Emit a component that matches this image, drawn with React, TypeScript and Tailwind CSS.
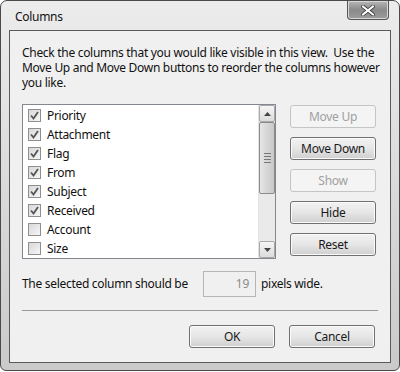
import React from "react";

const columns = [
  { name: "Priority", on: true },
  { name: "Attachment", on: true },
  { name: "Flag", on: true },
  { name: "From", on: true },
  { name: "Subject", on: true },
  { name: "Received", on: true },
  { name: "Account", on: false },
  { name: "Size", on: false },
];

const intro = [
  "Check the columns that you would like visible in this view.\u00a0 Use the",
  "Move Up and Move Down buttons to reorder the columns however",
  "you like.",
];

function Check({ on }: { on: boolean }) {
  return (
    <span className="w-[13px] h-[13px] border border-[#8e8f8f] bg-gradient-to-br from-[#d8d8d8] to-[#f6f6f6] flex items-center justify-center shrink-0">
      {on && (
        <svg width="9" height="9" viewBox="0 0 9 9">
          <path d="M1 4.5 L3.5 7.5 L8 1" fill="none" stroke="#555" strokeWidth="1.8" />
        </svg>
      )}
    </span>
  );
}

function Btn({ label, disabled }: { label: string; disabled?: boolean }) {
  return (
    <div
      className={
        "w-[86px] h-[23px] rounded-[3px] border flex items-center justify-center text-[12px] " +
        (disabled
          ? "border-[#c4c4c4] bg-[#f4f4f4] text-[#a0a0a0]"
          : "border-[#707070] bg-gradient-to-b from-[#f2f2f2] via-[#e6e6e6] to-[#cfcfcf] text-[#1a1a1a] shadow-[inset_0_0_0_1px_#fbfbfb]")
      }
    >
      {label}
    </div>
  );
}

export default function App() {
  return (
    <div className="w-[400px] h-[372px] bg-white tracking-[-0.3px]" style={{ fontFamily: '"Noto Sans", "Open Sans", sans-serif' }}>
      <div className="relative w-[400px] h-[371px] rounded-t-[7px] rounded-b-[6px] border border-[#4a4a4a] bg-gradient-to-b from-[#ececec] via-[#dadada] to-[#cacaca] px-[8px] pb-[7px] flex flex-col">
        <div className="h-[29px] flex items-center pl-[6px] pt-[2px] text-[12px] text-[#111]">Columns</div>
        <div className="absolute right-[10px] top-0 w-[42px] h-[19px] rounded-b-[4px] border border-t-0 border-[#555] bg-gradient-to-b from-[#b8b8b8] via-[#8a8a8a] to-[#9c9c9c] flex items-center justify-center shadow-[inset_0_0_0_1px_#d8d8d8]">
          <svg width="14" height="11" viewBox="0 0 14 11">
            <path d="M2 1.5 L12 9.5 M12 1.5 L2 9.5" stroke="#3a3a3a" strokeWidth="3.6" strokeLinecap="square" />
            <path d="M2 1.5 L12 9.5 M12 1.5 L2 9.5" stroke="#ffffff" strokeWidth="2" strokeLinecap="square" />
          </svg>
        </div>
        <div className="flex-1 border border-[#5a5a5a] bg-[#f0f0f0] px-[12px] pt-[14px] text-[12px] text-[#111] flex flex-col">
          <div className="flex flex-col">
            {intro.map((line) => (
              <div key={line} className="h-[15px] leading-[15px] whitespace-nowrap">{line}</div>
            ))}
          </div>
          <div className="flex mt-[14px] gap-[14px]">
            <div className="w-[254px] h-[155px] border border-[#828790] bg-white flex">
              <div className="flex-1 flex flex-col pt-[1px]">
                {columns.map((c) => (
                  <div key={c.name} className="h-[19px] flex items-center gap-[6px] pl-[5px]">
                    <Check on={c.on} />
                    <span>{c.name}</span>
                  </div>
                ))}
              </div>
              <div className="w-[17px] bg-[#eaeaea] border-l border-[#e2e2e2] flex flex-col">
                <div className="h-[17px] border border-[#a8a8a8] rounded-[2px] bg-gradient-to-b from-[#f5f5f5] to-[#dcdcdc] flex items-center justify-center">
                  <svg width="7" height="4" viewBox="0 0 7 4"><path d="M0 4 L3.5 0 L7 4 Z" fill="#444" /></svg>
                </div>
                <div className="h-[72px] border border-[#8b8b8b] rounded-[2px] bg-gradient-to-r from-[#e6e6e6] via-[#d6d6d6] to-[#c9c9c9] flex flex-col items-center justify-center gap-[2px]">
                  <div className="w-[7px] h-px bg-[#777]" />
                  <div className="w-[7px] h-px bg-[#777]" />
                  <div className="w-[7px] h-px bg-[#777]" />
                  <div className="w-[7px] h-px bg-[#777]" />
                </div>
                <div className="flex-1" />
                <div className="h-[17px] border border-[#a8a8a8] rounded-[2px] bg-gradient-to-b from-[#f5f5f5] to-[#dcdcdc] flex items-center justify-center">
                  <svg width="7" height="4" viewBox="0 0 7 4"><path d="M0 0 L3.5 4 L7 0 Z" fill="#444" /></svg>
                </div>
              </div>
            </div>
            <div className="flex flex-col gap-[9px] pt-[1px]">
              <Btn label="Move Up" disabled />
              <Btn label="Move Down" />
              <Btn label="Show" disabled />
              <Btn label="Hide" />
              <Btn label="Reset" />
            </div>
          </div>
          <div className="flex items-center mt-[12px]">
            <span className="w-[181px]">The selected column should be</span>
            <div className="w-[53px] h-[26px] border border-[#b5b5b5] bg-[#f0f0f0] text-[#8a8a8a] flex items-center justify-end pr-[6px]">19</div>
            <span className="ml-[5px]">pixels wide.</span>
          </div>
          <div className="h-px bg-[#9a9a9a] mt-[13px]" />
          <div className="flex justify-end gap-[14px] mt-[14px] pr-[3px]">
            <Btn label="OK" />
            <Btn label="Cancel" />
          </div>
        </div>
      </div>
    </div>
  );
}
